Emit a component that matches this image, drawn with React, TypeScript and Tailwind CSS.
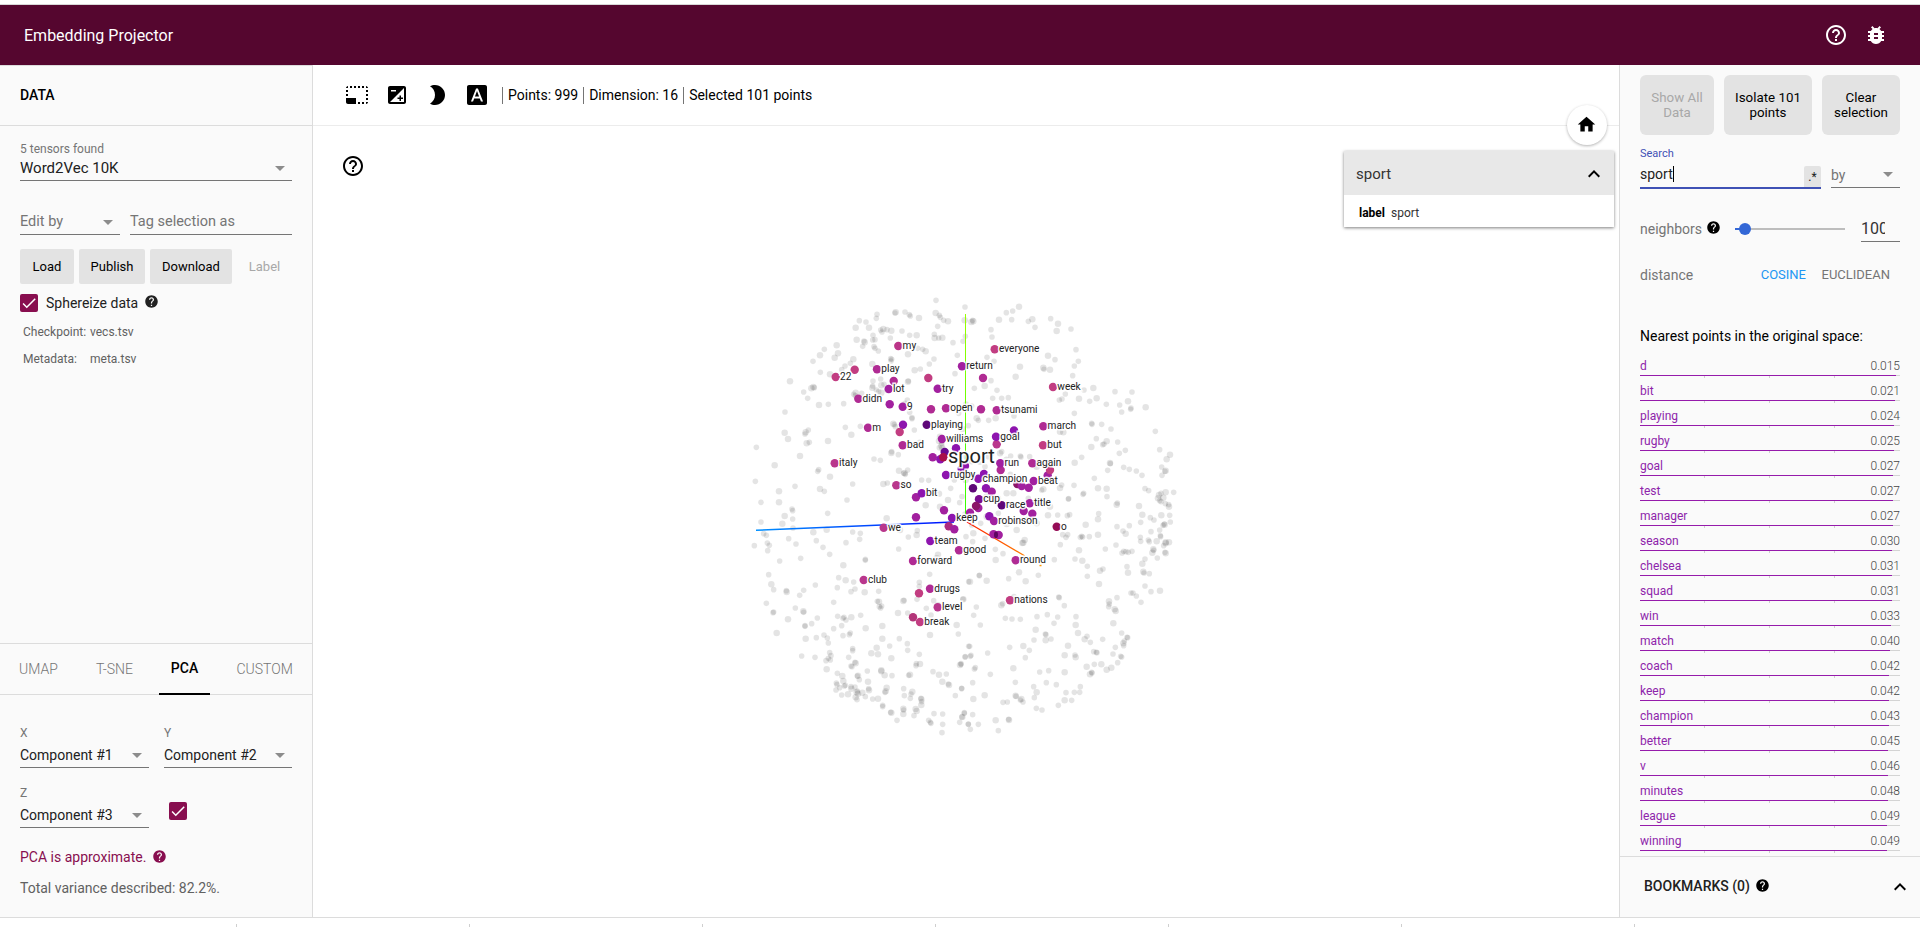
import React from "react";
import {
  MdArrowDropDown,
  MdBrightness2,
  MdBugReport,
  MdCheck,
  MdExpandLess,
  MdExposure,
  MdFontDownload,
  MdHelp,
  MdHelpOutline,
  MdHome,
  MdPhotoSizeSelectSmall,
} from "react-icons/md";

type Tile = { x: number; y: number; points: string };

// Unselected points, stored per tile in thirds of a pixel.
const tiles: Tile[] = [
  {
    x: 740,
    y: 280,
    points:
      "588,61 411,103 467,97 465,99 495,96 508,104 511,108 537,114 587,99 598,106 601,112 611,121 624,124 674,121 358,122 378,126 347,143 387,143 409,115 593,139 422,150 430,147 441,149 454,152 426,156 486,153 399,166 509,166 530,166 583,163 584,174 451,174 596,174 607,173 639,188 676,169 669,184 372,183 374,187 350,179 405,179 402,200 405,205 398,180 368,199 415,213 290,196 253,208 240,226 219,244 294,220 284,233 557,214 533,205 548,208 582,237 652,226 452,236 455,238 453,243 340,238 331,250 315,258 241,277 270,283 305,269 397,252 504,223 150,304 191,336 220,321 223,323 214,325 203,355 135,396 237,375 265,373 311,371 399,303 422,297 432,313 398,318 397,323 424,316 409,330 441,331 347,338 341,343 346,347 365,340 416,335 424,338 504,305 505,303 524,271 541,267 568,252 645,281 502,360 495,370 509,397 516,413 516,416 463,434 460,431 466,440 523,450 361,439 316,442 334,464 134,458 144,477 205,450 197,457 195,462 208,487 200,490 49,502 180,528 104,556 46,604 236,569 233,574 270,590 240,627 253,634 165,619 117,634 63,667 117,667 156,687 321,660 338,612 264,483 455,515 475,524 454,519 539,487 402,537 421,541 503,570 494,579 496,583 491,580 430,612 442,609 477,572 566,601 557,676 545,600 597,641 632,625 624,660 600,680 659,668 643,600 600,470 597,483 604,497 598,503 607,505 605,490 651,380 656,400",
  },
  {
    x: 960,
    y: 280,
    points:
      "15,81 139,98 158,93 177,80 117,119 155,119 205,124 217,118 225,142 272,116 294,131 290,153 333,147 38,121 40,124 34,126 93,149 96,171 348,209 355,244 343,258 338,287 264,227 285,239 250,263 252,268 270,269 81,232 102,244 180,260 167,290 93,302 74,318 43,325 111,331 98,355 125,355 145,353 316,342 306,357 298,360 357,356 372,330 400,324 389,364 410,355 343,400 465,335 516,336 504,364 479,375 513,384 512,388 485,396 439,373 557,382 586,454 395,430 396,433 425,433 453,447 409,476 440,484 428,494 432,492 394,501 473,486 496,511 478,520 450,549 451,551 365,532 344,548 443,571 508,568 491,562 529,573 546,586 599,509 630,524 620,538 605,561 617,572 615,574 606,586 403,595 342,616 371,640 369,643 325,657 326,656 414,625 440,626 441,650 472,669 470,674 537,678 555,626 566,632 603,640 617,637 641,637 610,653 594,655 599,662 603,665 616,671 626,674 627,680 597,645 162,408 107,415 86,421 50,415 55,421 18,372 35,378 25,437 7,447 120,520 125,515 152,528 181,528 183,531 209,530 230,560 139,538 85,530 300,455 310,457 60,545 75,560 96,520 118,590 151,583 300,624 245,630 250,628 205,655 115,655 140,640 20,530 35,545 17,600 30,590 80,650 6,650 270,680 305,615 160,640",
  },
  {
    x: 740,
    y: 510,
    points:
      "158,2 263,10 63,36 134,18 127,41 158,27 159,54 71,71 79,76 82,99 88,106 83,122 43,107 146,86 168,102 220,67 229,92 260,59 249,112 269,133 318,98 359,88 338,66 361,70 119,153 182,145 310,166 376,148 376,151 296,203 317,211 292,233 341,216 226,225 191,241 179,256 139,242 140,246 86,194 94,223 101,239 79,280 101,306 99,308 144,328 166,294 190,304 191,307 110,369 195,347 195,349 232,324 215,341 281,277 293,319 312,322 318,330 309,325 334,322 362,316 305,347 281,356 377,355 333,245 345,237 374,247 416,244 412,274 417,275 418,290 422,294 425,288 427,348 490,273 492,271 474,309 503,309 538,217 538,229 569,193 531,268 559,295 581,272 573,315 594,286 670,268 686,215 650,345 655,372 197,386 229,383 252,375 262,384 265,399 309,377 328,374 331,369 427,386 449,408 410,413 414,433 394,430 454,445 478,386 502,401 503,421 538,433 540,462 528,467 510,494 506,496 529,461 570,375 686,409 676,440 663,461 660,465 185,438 225,442 269,428 273,437 271,450 258,452 265,445 326,442 338,416 338,422 345,457 347,460 336,470 333,468 260,478 292,490 307,498 382,483 354,497 352,498 358,509 424,481 424,484 434,496 456,497 289,519 291,524 310,513 316,526 313,528 299,533 333,530 334,536 288,540 305,555 324,553 345,531 352,543 350,547 354,551 347,562 351,569 367,548 376,560 386,536 387,541 384,515 398,567 414,566 440,533 437,544 435,547 491,536 517,545 513,552 493,557 511,565 543,565 544,568 545,575 544,585 428,586 428,590 452,607 454,608 490,596 491,600 490,612 527,597 530,603 522,617 471,631 579,485 597,494 619,492 607,515 625,522 627,525 665,536 646,557 582,611 608,612 608,643 606,668 566,631 571,637 573,640 659,637 673,608 667,621 685,642 505,81 532,62 530,75 476,117 594,134 590,145 630,90 440,25 480,60",
  },
  {
    x: 960,
    y: 510,
    points:
      "264,16 293,15 329,14 322,17 377,44 416,11 414,28 323,74 308,74 318,82 357,121 365,79 368,81 361,82 388,80 301,104 471,50 489,63 508,47 497,71 414,74 468,105 436,117 542,37 547,14 571,23 582,30 604,16 629,16 631,36 613,42 614,44 609,46 599,60 573,65 541,82 542,94 601,77 602,80 565,90 568,95 590,94 617,97 617,100 611,107 627,97 580,118 581,121 577,128 615,127 617,130 592,144 555,147 547,161 491,124 498,125 505,127 516,124 486,129 501,170 504,188 550,185 552,189 568,191 283,149 345,147 367,152 382,169 420,182 429,177 382,199 417,222 555,228 573,245 600,242 513,249 519,249 529,258 543,277 471,263 447,274 448,282 446,290 464,298 467,303 460,340 190,98 194,90 187,99 177,187 197,214 235,196 146,206 80,212 58,196 58,197 30,215 107,150 129,131 106,118 9,268 49,291 41,316 61,345 124,286 128,281 136,325 156,327 181,328 162,260 296,261 298,263 313,287 262,314 231,320 293,321 282,340 227,359 348,320 347,345 354,369 256,372 258,374 257,391 273,387 222,390 381,379 374,388 391,397 428,388 485,369 501,382 503,383 493,393 490,400 491,407 466,412 459,432 482,439 485,441 401,425 409,427 411,428 345,435 347,442 314,436 324,407 190,408 208,421 196,443 149,412 83,429 29,409 15,441 33,436 31,439 3,463 46,473 43,477 91,493 160,475 239,486 266,482 314,487 380,470 403,463 424,463 473,458 454,473 440,479 395,487 396,489 390,493 289,524 259,518 221,530 230,547 223,563 361,530 343,547 359,547 318,548 335,571 314,571 295,586 229,595 246,600 167,557 168,559 181,570 184,567 189,576 166,517 38,518 74,556 40,567 5,535 129,577 142,576 38,614 13,610 6,621 25,643 55,643 31,658 107,631 115,662 146,628 147,630 62,40 80,20 35,45 40,70 38,95 18,80 75,85 15,12 115,10 140,42 200,30 230,40 170,60",
  },
];

const P = "#c23d81";
const M = "#b02b93";
const V = "#a2209f";
const N = "#8e15ae";
const D = "#5f0878";

type Dot = [number, number, string, string?];

const dots: Dot[] = [
  [898.3, 346, "#bb3588", "my"],
  [877, 369.3, M, "play"],
  [835.7, 377, P, "22"],
  [854.7, 369.7, P],
  [893.7, 381, M],
  [888.7, 389, V, "lot"],
  [858.3, 398.7, M, "didn"],
  [902.7, 406.7, V, "9"],
  [889.7, 404.3, V],
  [928.3, 378, P],
  [937.7, 388.7, V, "try"],
  [931, 409.3, M],
  [946, 408.3, M, "open"],
  [926.7, 424.7, D, "playing"],
  [903, 424.7, N],
  [899.7, 432, P],
  [868, 427.7, M, "m"],
  [902.7, 445.3, M, "bad"],
  [942, 439, V, "williams"],
  [834.7, 463.3, "#b9378c", "italy"],
  [896.3, 485.3, "#b9378c", "so"],
  [916, 497.3, V],
  [921.7, 493.3, N, "bit"],
  [944.7, 452, "#6a0a90"],
  [932.7, 457.3, V],
  [940.3, 459.3, N],
  [956, 448.3, N],
  [943.3, 457.3, "#a8104a"],
  [946, 475, N, "rugby"],
  [961.7, 469, N],
  [965, 466, N],
  [962, 366.3, V, "return"],
  [944, 510.3, V],
  [916, 517.3, V],
  [973, 488.3, D],
  [978.3, 478.7, N, "champion"],
  [984, 474, N],
  [986, 488.3, N],
  [991.7, 491.7, V],
  [1017.3, 484, "#8c1468"],
  [1021.7, 486, V],
  [1028.7, 487.7, V],
  [1047.7, 475.5, V],
  [1050, 470, P],
  [1033.7, 481, V, "beat"],
  [979, 499.3, "#7a0c8e", "cup"],
  [978.3, 508, V],
  [976, 506, "#8c1468"],
  [970, 512.7, V],
  [1001.7, 505.3, D, "race"],
  [1023.7, 511, V],
  [1032.3, 513.7, V],
  [1029.7, 503.3, V, "title"],
  [989.3, 516.3, N],
  [994, 521, V, "robinson"],
  [952, 518, N, "keep"],
  [948.7, 526.3, "#ad2a7f"],
  [954.3, 529.3, V],
  [930.3, 541, N, "team"],
  [959, 550.3, M, "good"],
  [993.5, 534.3, V],
  [998.7, 535, V],
  [1056.7, 526.7, "#950c55", "o"],
  [883.7, 527.7, "#b9378c", "we"],
  [996.7, 444.3, "#b9378c"],
  [1014, 430.5, N],
  [996, 436.7, N, "goal"],
  [1000.7, 470, M],
  [1000.3, 463.3, V, "run"],
  [1032.3, 463.3, M, "again"],
  [996.7, 410.3, M, "tsunami"],
  [981, 409.3, M],
  [1043, 445.3, P, "but"],
  [1043.3, 426.3, M, "march"],
  [1053, 387, P, "week"],
  [994.7, 349.3, P, "everyone"],
  [983, 378, M],
  [913, 561, M, "forward"],
  [863.7, 580, "#b9378c", "club"],
  [919, 593.3, P],
  [930, 588.7, M, "drugs"],
  [937.7, 607.3, "#b9378c", "level"],
  [913, 617.3, "#b33579"],
  [920, 622, P, "break"],
  [1015.7, 560.3, M, "round"],
  [1010, 600.3, P, "nations"],
];

const largeDigits = new Set(["7", "0", "4"]);

function Scatter() {
  return (
    <svg
      className="block h-full w-full font-['Roboto',sans-serif]"
      viewBox="313 126 1306 791"
    >
      <defs>
        <linearGradient id="axisY" gradientUnits="userSpaceOnUse" x1="0" y1="314" x2="0" y2="515">
          <stop offset="0" stopColor="#99ff00" />
          <stop offset="1" stopColor="#33ff00" />
        </linearGradient>
        <linearGradient id="axisZ" gradientUnits="userSpaceOnUse" x1="756" y1="0" x2="955" y2="0">
          <stop offset="0" stopColor="#0090ff" />
          <stop offset="1" stopColor="#0010ff" />
        </linearGradient>
        <linearGradient id="axisX" gradientUnits="userSpaceOnUse" x1="967" y1="0" x2="1041" y2="0">
          <stop offset="0" stopColor="#ff1e00" />
          <stop offset="1" stopColor="#ff9900" />
        </linearGradient>
      </defs>
      {tiles.map((t) => (
        <g
          key={`${t.x}-${t.y}`}
          transform={`translate(${t.x} ${t.y}) scale(0.33333)`}
          fill="#000"
          fillOpacity="0.105"
        >
          {t.points.split(" ").map((p, i) => {
            const [x, y] = p.split(",");
            return <circle key={i} cx={x} cy={y} r={largeDigits.has(x.slice(-1)) ? 9.8 : 8.4} />;
          })}
        </g>
      ))}
      <path d="M965.5 314V515" stroke="url(#axisY)" shapeRendering="crispEdges" />
      <path d="M756 530.3L954 522" stroke="url(#axisZ)" strokeWidth="1.4" />
      <path d="M967 522L1024.5 555.8M1039.5 565.5h2" stroke="url(#axisX)" strokeWidth="1.3" />
      {dots.map(([x, y, c], i) => (
        <circle key={i} cx={x} cy={y} r="4.2" fill={c} />
      ))}
      <ellipse cx="996" cy="534.8" rx="2" ry="3.4" fill="#5f0560" />
      <g
        fontSize="10.1"
        fill="#222"
        stroke="#fff"
        strokeOpacity="0.9"
        strokeWidth="3"
        paintOrder="stroke"
      >
        {dots.map(([x, y, , label], i) =>
          label ? (
            <text key={i} x={x + 4.3} y={y + 3}>
              {label}
            </text>
          ) : null,
        )}
        <text x="948" y="463" fontSize="20">
          sport
        </text>
      </g>
    </svg>
  );
}

function Select({ value, className, muted }: { value: string; className: string; muted?: boolean }) {
  return (
    <div className={`flex h-6 items-center justify-between border-b border-[#757575] ${className}`}>
      <span className={muted ? "text-[#757575]" : "text-[#212121]"}>{value}</span>
      <MdArrowDropDown className="-mt-px size-6 text-[#8c8c8c]" />
    </div>
  );
}

function Checkbox() {
  return (
    <span className="flex size-[18px] items-center justify-center rounded-xs bg-[#880e4f] text-white">
      <MdCheck className="size-[18px]" />
    </span>
  );
}

function DataPanel() {
  return (
    <aside className="flex w-[313px] shrink-0 flex-col border-r border-[#dcdcdc] bg-[#fafafa]">
      <div className="h-[61px] border-y border-[#dcdcdc] px-5 text-sm leading-[59px] font-medium text-black">
        DATA
      </div>
      <div className="flex flex-col px-5 text-[14px]">
        <div className="mt-4 text-xs leading-[15px] text-[#757575]">5 tensors found</div>
        <Select value="Word2Vec 10K" className="text-[15px]" />
        <div className="mt-[30px] flex gap-[10px]">
          <Select value="Edit by" className="w-[100px] pb-px text-[14.5px]" muted />
          <div className="flex h-6 flex-1 items-center border-b border-[#757575] pb-px text-[14.5px] text-[#757575]">
            Tag selection as
          </div>
        </div>
        <div className="mt-[14px] flex h-[35px] gap-[5px] text-[13px] text-black">
          <div className="flex w-[54px] items-center justify-center rounded-xs bg-[#e3e3e3]">Load</div>
          <div className="flex w-[66px] items-center justify-center rounded-xs bg-[#e3e3e3]">Publish</div>
          <div className="flex w-[82px] items-center justify-center rounded-xs bg-[#e3e3e3]">Download</div>
          <div className="flex w-[55px] items-center justify-center text-[#a8a8a8]">Label</div>
        </div>
        <div className="mt-[10px] flex h-[18px] items-center">
          <Checkbox />
          <span className="ml-2 pt-px text-[#212121]">Sphereize data</span>
          <MdHelp className="mb-[3px] ml-[6px] size-[15px] text-[#212121]" />
        </div>
        <div className="mt-[7px] grid grid-cols-[67px_1fr] pl-[3px] text-xs leading-[27px] text-[#616161]">
          <span>Checkpoint:</span>
          <span>vecs.tsv</span>
          <span>Metadata:</span>
          <span>meta.tsv</span>
        </div>
      </div>
      <div className="mt-auto flex h-[52px] border-y border-[#dcdcdc] text-sm leading-[51px] font-light text-[#757575]">
        <span className="w-[76px] pl-[19px]">UMAP</span>
        <span className="w-[83px] pl-5">T-SNE</span>
        <span className="h-[51px] w-[51px] border-b-2 border-black text-center leading-[49px] font-medium text-black">
          PCA
        </span>
        <span className="pl-[26.5px]">CUSTOM</span>
      </div>
      <div className="h-[222px] px-5 text-[14px]">
        <div className="flex gap-[15px] pt-[31px]">
          <div className="w-[129px]">
            <div className="text-xs leading-[15px] text-[#757575]">X</div>
            <Select value="Component #1" className="mt-[3px] pb-px" />
          </div>
          <div className="flex-1">
            <div className="text-xs leading-[15px] text-[#757575]">Y</div>
            <Select value="Component #2" className="mt-[3px] pb-px" />
          </div>
        </div>
        <div className="flex gap-5 pt-[18px]">
          <div className="w-[129px]">
            <div className="text-xs leading-[15px] text-[#757575]">Z</div>
            <Select value="Component #3" className="mt-[3px] pb-px" />
          </div>
          <div className="pt-[16px]">
            <Checkbox />
          </div>
        </div>
        <div className="mt-[19px] flex h-5 items-center text-[#880e4f]">
          PCA is approximate.
          <MdHelp className="mb-px ml-[6px] size-[15px]" />
        </div>
        <div className="mt-[11px] leading-5 text-[#616161]">Total variance described: 82.2%.</div>
      </div>
    </aside>
  );
}

function Viewer() {
  return (
    <main className="relative flex min-w-0 flex-1 flex-col bg-white">
      <div className="flex h-[61px] items-center border-b border-[#ececec] pl-8 text-sm text-black">
        <div className="flex gap-4">
          <MdPhotoSizeSelectSmall className="size-6" />
          <MdExposure className="size-6" />
          <MdBrightness2 className="size-6" />
          <MdFontDownload className="size-6" />
        </div>
        <span className="ml-[13px] border-l border-[#757575] pl-[5px] leading-[17px]">Points: 999</span>
        <span className="ml-[5px] border-l border-[#757575] pl-[5px] leading-[17px]">Dimension: 16</span>
        <span className="ml-[5px] border-l border-[#757575] pl-[5px] leading-[17px]">
          Selected 101 points
        </span>
      </div>
      <div className="min-h-0 flex-1">
        <Scatter />
      </div>
      <MdHelpOutline className="absolute top-[89px] left-7 size-6 text-black" />
      <div className="absolute top-10 right-3 flex size-10 items-center justify-center rounded-full bg-white shadow-[0_1px_3px_rgba(0,0,0,0.3)]">
        <MdHome className="mr-px mb-px size-[21px] text-black" />
      </div>
      <div className="absolute top-[86px] right-[5px] w-[270px] bg-white shadow-[0_1px_3px_rgba(0,0,0,0.5)]">
        <div className="flex h-11 items-center justify-between bg-[#e8e8e8] pr-2 pl-3 text-[15px] text-[#333]">
          <span className="pt-0.5">sport</span>
          <MdExpandLess className="mt-0.5 size-6 text-black" />
        </div>
        <div className="flex h-8 items-center gap-[6px] pt-1 pl-[15px] text-xs text-[#333]">
          <span className="font-bold text-black">label</span>
          <span>sport</span>
        </div>
      </div>
    </main>
  );
}

const neighbors: [string, number][] = [
  ["d", 0.015],
  ["bit", 0.021],
  ["playing", 0.024],
  ["rugby", 0.025],
  ["goal", 0.027],
  ["test", 0.027],
  ["manager", 0.027],
  ["season", 0.03],
  ["chelsea", 0.031],
  ["squad", 0.031],
  ["win", 0.033],
  ["match", 0.04],
  ["coach", 0.042],
  ["keep", 0.042],
  ["champion", 0.043],
  ["better", 0.045],
  ["v", 0.046],
  ["minutes", 0.048],
  ["league", 0.049],
  ["winning", 0.049],
];

function NeighborRow({ name, value }: { name: string; value: number }) {
  return (
    <div className="h-[25px] text-xs">
      <div className="flex h-[18px] items-center justify-between">
        <span className="text-[#8e24aa]">{name}</span>
        <span className="font-light text-[#444]">{value.toFixed(3)}</span>
      </div>
      <div className="h-px bg-[#d4d4d4]">
        <div className="h-px bg-[#961bab]" style={{ width: `${(1 - value) * 100}%` }} />
      </div>
      <div className="grid h-0.5 grid-cols-4">
        <span className="border-r border-[#cfcfcf]" />
        <span className="border-r border-[#cfcfcf]" />
        <span className="border-r border-[#cfcfcf]" />
      </div>
    </div>
  );
}

function InspectorPanel() {
  return (
    <aside className="flex w-[301px] shrink-0 flex-col border-l border-[#dcdcdc] bg-[#fafafa]">
      <div className="flex min-h-0 flex-1 flex-col overflow-hidden px-5 text-sm">
        <div className="mt-[10px] flex h-[60px] shrink-0 gap-[10px] text-center text-[13.33px] leading-[15px] text-black">
          <div className="flex w-[74px] items-center justify-center rounded-md bg-[#e3e3e3] text-[#a8a8a8]">
            Show All
            <br />
            Data
          </div>
          <div className="flex w-[88px] items-center justify-center rounded-md bg-[#e3e3e3]">
            Isolate 101
            <br />
            points
          </div>
          <div className="flex w-[78px] items-center justify-center rounded-md bg-[#e3e3e3]">
            Clear
            <br />
            selection
          </div>
        </div>
        <div className="mt-[12px] text-[11px] leading-[14px] text-[#3f51b5]">Search</div>
        <div className="mt-[5px] flex h-[23px] shrink-0 items-start gap-[10px]">
          <div className="flex h-[23px] w-[181px] items-start justify-between border-b-2 border-[#3f51b5] text-[#212121]">
            <span className="border-r border-black leading-4">sport</span>
            <span className="flex h-[21px] w-[17px] items-center justify-center rounded-t-xs bg-[#e3e3e3] text-xs">
              .*
            </span>
          </div>
          <Select value="by" className="-mt-[2px] w-[69px] pb-0.5" muted />
        </div>
        <div className="mt-[25px] flex h-[29px] shrink-0 text-[#757575]">
          <span className="w-[66px] leading-[30px]">neighbors</span>
          <MdHelp className="mt-[6px] size-[15px] text-black" />
          <div className="relative mt-[14px] ml-[14px] h-0.5 w-[110px] bg-[#bdbdbd]">
            <div className="absolute -top-[5px] left-1 size-3 rounded-full bg-[#3367d6]" />
            <div className="h-0.5 w-[10px] bg-[#3367d6]" />
          </div>
          <div className="ml-auto h-[28px] w-[39px] border-b border-[#757575]">
            <div className="w-6 overflow-hidden text-base leading-[29px] text-[#333]">100</div>
          </div>
        </div>
        <div className="mt-[22px] flex h-5 shrink-0 items-center text-[#757575]">
          <span>distance</span>
          <span className="ml-auto pt-px text-[13px] text-[#2196f3]">COSINE</span>
          <span className="mr-[10px] ml-[15.5px] pt-px text-[13px]">EUCLIDEAN</span>
        </div>
        <div className="mt-[41px] h-5 shrink-0 text-black">Nearest points in the original space:</div>
        <div className="mt-[11px]">
          {neighbors.map(([n, v]) => (
            <NeighborRow key={n} name={n} value={v} />
          ))}
        </div>
      </div>
      <div className="flex h-[61px] shrink-0 items-start border-t border-[#dcdcdc] pt-4 pr-2 pl-6 text-sm text-[#212121]">
        <span className="leading-[26px] font-medium">BOOKMARKS (0)</span>
        <MdHelp className="mt-[5px] ml-[5px] size-[15px] text-black" />
        <MdExpandLess className="mt-[2px] ml-auto size-6 text-black" />
      </div>
    </aside>
  );
}

export default function App() {
  return (
    <div className="flex h-[927px] w-[1920px] flex-col overflow-hidden bg-white font-['Roboto',sans-serif]">
      <div className="h-[5px] shrink-0 border-b border-[#d8d8d8] bg-white" />
      <header className="flex h-[60px] shrink-0 items-center bg-[#55062f] pr-8 pl-6 text-white">
        <h1 className="flex-1 pt-0.5 text-base">Embedding Projector</h1>
        <MdHelpOutline className="size-6" />
        <MdBugReport className="ml-4 size-6" />
      </header>
      <div className="flex h-[852px] shrink-0">
        <DataPanel />
        <Viewer />
        <InspectorPanel />
      </div>
      <footer className="flex h-[10px] shrink-0 items-end border-t border-[#dcdcdc] pl-1">
        {[0, 1, 2, 3, 4, 5, 6].map((i) => (
          <span key={i} className="h-[3px] w-[233px] border-r border-[#cfcfcf]" />
        ))}
      </footer>
    </div>
  );
}
